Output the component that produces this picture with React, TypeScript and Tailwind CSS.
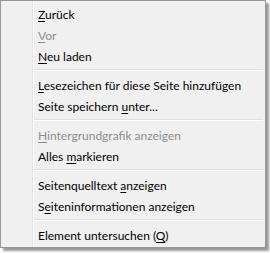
import React from 'react';

type Item = { pre: string; key: string; post: string; disabled?: boolean } | 'sep';

const items: Item[] = [
  { pre: '', key: 'Z', post: 'urück' },
  { pre: '', key: 'V', post: 'or', disabled: true },
  { pre: '', key: 'N', post: 'eu laden' },
  'sep',
  { pre: '', key: 'L', post: 'esezeichen für diese Seite hinzufügen' },
  { pre: 'Seite speichern ', key: 'u', post: 'nter...' },
  'sep',
  { pre: '', key: 'H', post: 'intergrundgrafik anzeigen', disabled: true },
  { pre: 'Alles ', key: 'm', post: 'arkieren' },
  'sep',
  { pre: 'Seitenquelltext ', key: 'a', post: 'nzeigen' },
  { pre: 'S', key: 'e', post: 'iteninformationen anzeigen' },
  'sep',
  { pre: 'Element untersuchen (', key: 'Q', post: ')' },
];

export default function App() {
  return (
    <div className="w-[270px] h-[253px] bg-white">
      <div
        className="relative w-[266px] border border-[#979797] bg-[#f0f0f0] py-[2px] shadow-[3px_3px_2px_rgba(0,0,0,0.4)]"
        style={{ fontFamily: 'Lato, "Noto Sans", sans-serif' }}
      >
        {/* gutter line */}
        <div className="absolute left-[31px] top-0 bottom-0 w-[2px] border-l border-[#e2e3e3] border-r-white border-r" />
        {items.map((it, i) =>
          it === 'sep' ? (
            <div key={i} className="h-[8px] flex flex-col justify-center pl-[33px] pr-[2px]">
              <div className="h-px bg-[#e0e0e0]" />
              <div className="h-px bg-white" />
            </div>
          ) : (
            <div
              key={i}
              className={`h-[21px] flex items-center pt-[2px] pl-[37px] text-[12px] leading-none whitespace-nowrap ${
                it.disabled ? 'text-[#8d8d8d]' : 'text-black'
              }`}
            >
              <span>
                {it.pre}
                <u className="underline-offset-2">{it.key}</u>
                {it.post}
              </span>
            </div>
          )
        )}
      </div>
    </div>
  );
}
